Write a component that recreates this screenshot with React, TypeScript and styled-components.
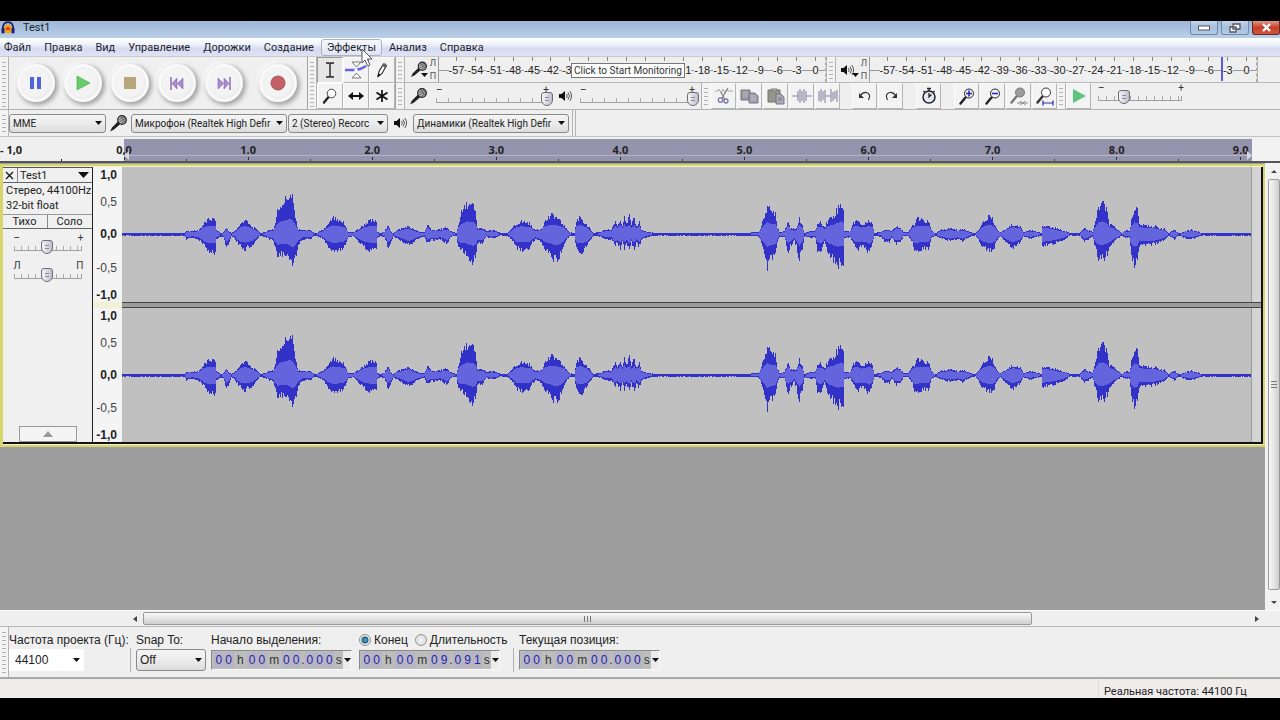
import React from "react";
import styled, { createGlobalStyle, css } from "styled-components";

const uiFont = `Roboto, "Noto Sans", sans-serif`;
const plainFont = `"Liberation Sans", Arial, sans-serif`;

const GlobalStyle = createGlobalStyle`
  *, *::before, *::after { box-sizing: border-box; }
  html, body { margin: 0; padding: 0; background: #000; }
  body { font-family: ${uiFont}; font-size: 12px; color: #222; }
  button, select, input { font: inherit; color: inherit; margin: 0; }
`;

/* ---------- window frame ---------- */

const Screen = styled.div`
  min-height: 100vh;
  padding: 21px 0 22px;
  background: #000;
  display: flex;
  flex-direction: column;
`;

const Window = styled.div`
  flex: 1;
  display: flex;
  flex-direction: column;
  background: #efefef;
  overflow: hidden;
`;

const TitleBar = styled.header`
  height: 17px;
  display: flex;
  align-items: flex-start;
  gap: 8px;
  padding-left: 1px;
  background: linear-gradient(#9db7d6, #b9cfe9);
`;

const Title = styled.h1`
  margin: 0;
  flex: 1;
  font: 400 11px/14px ${uiFont};
  color: #1c2430;
`;

const WindowButtons = styled.div`
  display: flex;
  gap: 3px;
`;

const WindowButton = styled.button<{ $close?: boolean }>`
  width: 28px;
  height: 14px;
  padding: 0;
  display: flex;
  align-items: center;
  justify-content: center;
  border: 1px solid ${(p) => (p.$close ? "#6a2a22" : "#6f88a8")};
  border-top: 0;
  border-radius: 0 0 3px 3px;
  background: ${(p) =>
    p.$close ? "linear-gradient(#e09a88, #c4402a 50%, #d0553a)" : "linear-gradient(#c4d5ea, #a5bfdd 50%, #b4cbe6)"};
`;

const MenuBar = styled.nav`
  height: 19px;
  display: flex;
  padding: 1px 0 0;
  background: linear-gradient(#ffffff, #f1f4fb 30%, #d6dcf0 60%, #dde3f3);
  border-bottom: 1px solid #c9c9cf;
`;

const MenuItem = styled.button<{ $hot?: boolean }>`
  height: 17px;
  padding: 0 5px;
  margin-right: 1px;
  border: 1px solid ${(p) => (p.$hot ? "#a9b0c2" : "transparent")};
  border-radius: 3px;
  background: ${(p) => (p.$hot ? "linear-gradient(#f6f8fd, #dfe4f2)" : "transparent")};
  font: 400 11px/14px ${uiFont};
  color: #1e1e30;
  position: relative;
  white-space: nowrap;
  &:first-child { padding-left: 3px; }
`;

const Pointer = styled.svg`
  position: absolute;
  left: 39px;
  top: 8px;
  z-index: 5;
`;

/* ---------- toolbars ---------- */

const Grip = styled.div<{ $bare?: boolean }>`
  width: 9px;
  flex: none;
  align-self: stretch;
  border-right: ${(p) => (p.$bare ? "0" : "1px solid #b4b4b4")};
  background:
    repeating-linear-gradient(transparent 0 3px, #b0b0b0 3px 4px) 2px 2px / 4px calc(100% - 4px) no-repeat,
    #f3f3f3;
`;

const ToolDock = styled.section`
  display: flex;
  height: 53px;
  border-bottom: 1px solid #b2b2b2;
`;

const Transport = styled.div`
  display: flex;
  align-items: center;
  gap: 9px;
  width: 299px;
  padding-left: 8px;
  border-right: 1px solid #a4a4a4;
`;

const RoundButton = styled.button<{ $apart?: boolean }>`
  width: 38px;
  height: 38px;
  margin-left: ${(p) => (p.$apart ? "7px" : "0")};
  padding: 0;
  display: flex;
  align-items: center;
  justify-content: center;
  border: 3px solid #f8f8f8;
  border-radius: 50%;
  background: #f3f3f3;
  box-shadow: 2px 2px 4px 1px #a6a6a6, -2px -2px 3px #fcfcfc, inset -1px -1px 3px #e8e8e8;
`;

const ToolGrid = styled.div`
  display: grid;
  grid-template-columns: repeat(3, 26px);
  grid-template-rows: 26px 26px;
  border-right: 1px solid #a4a4a4;
`;

const ToolButton = styled.button<{ $pressed?: boolean; $wide?: boolean }>`
  width: ${(p) => (p.$wide ? "26px" : "25px")};
  height: 100%;
  padding: 0;
  display: flex;
  align-items: center;
  justify-content: center;
  background: ${(p) => (p.$pressed ? "#e6e6e6" : "#f3f3f3")};
  border: 1px solid;
  border-color: ${(p) => (p.$pressed ? "#9a9a9a #fff #fff #9a9a9a" : "#fbfbfb #b4b4b4 #b4b4b4 #fbfbfb")};
`;

const Stack = styled.div`
  flex: 1;
  min-width: 0;
`;

const StackRow = styled.div`
  display: flex;
  height: 26px;
  &:first-child { border-bottom: 1px solid #b8b8b8; }
`;

const Meter = styled.button`
  display: flex;
  align-items: stretch;
  padding: 0 0 0 5px;
  border: 0;
  border-right: 1px solid #b0b0b0;
  background: transparent;
  position: relative;
`;

const MeterSource = styled.span`
  width: 18px;
  display: flex;
  align-items: center;
`;

const ChannelNames = styled.span`
  width: 10px;
  display: flex;
  flex-direction: column;
  justify-content: space-around;
  font-size: 9px;
  line-height: 12px;
  color: #555;
`;

const MeterScale = styled.span`
  width: 388px;
  display: flex;
  padding-left: 8px;
  border-left: 1px solid #999;
  border-right: 1px dashed #aaa;
  background: linear-gradient(#999, #999) 0 13px / 100% 1px no-repeat;
  position: relative;
`;

const MeterTick = styled.span`
  flex: 1;
  display: flex;
  flex-direction: column;
  align-items: center;
  font-family: ${plainFont};
  font-size: 11px;
  line-height: 14px;
  color: #222;
  &::before {
    content: "";
    width: 1px;
    height: 4px;
    margin-bottom: 2px;
    background: #888;
  }
`;

const MeterNumber = styled.span<{ $covered?: boolean }>`
  background: #efefef;
  visibility: ${(p) => (p.$covered ? "hidden" : "visible")};
`;

const PeakLine = styled.span`
  position: absolute;
  right: 33px;
  top: 0;
  bottom: 1px;
  width: 2px;
  background: #5a5ae6;
`;

const Tooltip = styled.span`
  position: absolute;
  left: 166px;
  top: 6px;
  padding: 0 2px;
  border: 1px solid #777;
  background: #fff;
  font-family: ${uiFont};
  font-size: 10px;
  line-height: 13px;
  color: #333;
  white-space: nowrap;
`;

const Mixer = styled.div`
  display: flex;
  align-items: center;
  gap: 6px;
  width: 297px;
  padding-left: 4px;
  border-right: 1px solid #b0b0b0;
`;

const ButtonRun = styled.div<{ $before?: number }>`
  display: flex;
  gap: 1px;
  margin-left: ${(p) => p.$before ?? 0}px;
`;

/* ---------- slider ---------- */

const SliderBox = styled.label<{ $w: number }>`
  width: ${(p) => p.$w}px;
  height: 22px;
  flex: none;
  display: grid;
  & > * { grid-area: 1 / 1; }
`;

const SliderEnds = styled.span`
  align-self: start;
  display: flex;
  justify-content: space-between;
  padding: 0 4px 0 2px;
  font-size: 10px;
  line-height: 9px;
  color: #333;
`;

const SliderTicks = styled.span<{ $step: number }>`
  align-self: end;
  height: 5px;
  margin: 0 6px 4px 2px;
  border-bottom: 1px solid #a0a0a0;
  border-right: 1px solid #a0a0a0;
  background: repeating-linear-gradient(90deg, #aaa 0 1px, transparent 1px ${(p) => p.$step}px);
`;

const Range = styled.input`
  appearance: none;
  align-self: end;
  width: 100%;
  height: 15px;
  background: transparent;
  &::-webkit-slider-runnable-track { height: 15px; background: transparent; }
  &::-webkit-slider-thumb {
    appearance: none;
    width: 12px;
    height: 14px;
    border: 1px solid #6c6c78;
    border-radius: 3px 3px 6px 6px;
    background:
      linear-gradient(#8c8c98, #8c8c98) 3px 4px / 4px 1px no-repeat,
      linear-gradient(#8c8c98, #8c8c98) 3px 7px / 4px 1px no-repeat,
      linear-gradient(90deg, #f4f4f8, #c0c0cc);
  }
`;

type SliderProps = { name: string; value: number; width: number; step?: number; low?: string; high?: string };

const Slider = ({ name, value, width, step = 12, low = "–", high = "+" }: SliderProps) => (
  <SliderBox $w={width}>
    <SliderEnds>
      <span>{low}</span>
      <span>{high}</span>
    </SliderEnds>
    <SliderTicks $step={step} />
    <Range type="range" aria-label={name} min={0} max={100} defaultValue={value} />
  </SliderBox>
);

/* ---------- drop-downs ---------- */

const DeviceBar = styled.section`
  display: flex;
  align-items: center;
  height: 27px;
  border-bottom: 1px solid #c4c4c4;
`;

const SelectBox = styled.span<{ $w: number }>`
  width: ${(p) => p.$w}px;
  display: grid;
  align-items: center;
  & > * { grid-area: 1 / 1; }
  & > svg { justify-self: end; margin-right: 4px; pointer-events: none; }
`;

const selectBase = css`
  appearance: none;
  width: 100%;
  padding: 0 12px 0 3px;
  outline: 0;
  overflow: hidden;
`;

const DeviceSelect = styled.select`
  ${selectBase}
  height: 19px;
  border: 1px solid #8a8a8a;
  border-radius: 3px;
  background: linear-gradient(#f5f5f5, #ebebeb 50%, #dcdcdc);
  font-size: 10px;
`;

const SnapSelect = styled(DeviceSelect)`
  height: 22px;
  font-size: 12px;
`;

const RateSelect = styled.select`
  ${selectBase}
  height: 22px;
  padding-left: 5px;
  border: 1px solid #fff;
  background: #fff;
`;

const Arrow = () => (
  <svg width="7" height="4" viewBox="0 0 7 4" aria-hidden="true">
    <path d="M0 0h7L3.500 4z" fill="#111" />
  </svg>
);

const DeviceIcon = styled.span<{ $w: number }>`
  width: ${(p) => p.$w}px;
  display: flex;
  justify-content: center;
`;

const DeviceEnd = styled.div`
  width: 4px;
  align-self: stretch;
  margin-left: 3px;
  border: 1px solid #b4b4b4;
  border-width: 0 1px;
`;

const devices = {
  host: "MME",
  input: "Микрофон (Realtek High Defir",
  channels: "2 (Stereo) Recorc",
  output: "Динамики (Realtek High Defir",
};

const Device = ({ name, width, value }: { name: string; width: number; value: string }) => (
  <SelectBox $w={width}>
    <DeviceSelect aria-label={name} defaultValue={value}>
      <option>{value}</option>
    </DeviceSelect>
    <Arrow />
  </SelectBox>
);

/* ---------- time ruler ---------- */

const Ruler = styled.section`
  display: flex;
  height: 26px;
  padding-top: 2px;
  border-bottom: 2px solid #55565a;
  font: 700 11px/14px "Open Sans", sans-serif;
  color: #222;
`;

const RulerLead = styled.div`
  width: 124px;
  flex: none;
  padding: 4px 0 0;
  background: linear-gradient(#222, #222) 61px 20px / 1px 2px no-repeat;
`;

const RulerBand = styled.div`
  flex: 1;
  display: grid;
  grid-template-columns: repeat(9, 11%) 1fr;
  background: linear-gradient(#b4b4c0, #b4b4c0) 0 16px / 100% 1px no-repeat, #9494ae;
  position: relative;
`;

const RulerMark = styled.div`
  margin-left: -20px;
  width: 40px;
  padding-top: 4px;
  display: flex;
  flex-direction: column;
  align-items: center;
  &::after {
    content: "";
    width: 1px;
    height: 3px;
    background: #333;
  }
`;

const RulerCell = styled.div`
  background: linear-gradient(#444, #444) 50% 20px / 1px 2px no-repeat;
  min-width: 0;
  &:last-of-type { background: none; }
`;

const RulerTail = styled.div`
  width: 28px;
  flex: none;
  background: #f2f2f2;
`;

const EdgeArrow = styled.svg<{ $end?: boolean }>`
  position: absolute;
  bottom: 1px;
  ${(p) => (p.$end ? "right: 0;" : "left: 0;")}
`;

/* ---------- tracks ---------- */

const Workspace = styled.main`
  flex: 1;
  display: flex;
  min-height: 0;
  background: #9e9e9e;
`;

const TrackList = styled.div`
  flex: 1;
  min-width: 0;
  padding-top: 1px;
`;

const Track = styled.article`
  display: flex;
  height: 283px;
  padding: 1px 0 1px 0;
  border: 2px solid #d6d66a;
  border-left-width: 3px;
  background: #f1f1d8;
  & > * { border-bottom: 2px solid #111; }
`;

const TrackPanel = styled.div`
  width: 90px;
  flex: none;
  display: flex;
  flex-direction: column;
  border-right: 1px solid #222;
  border-top: 1px solid #555;
  background: #f0f0f0;
  font-size: 11px;
`;

const PanelRow = styled.div`
  display: flex;
  height: 15px;
  border-bottom: 1px solid #666;
`;

const PanelButton = styled.button<{ $grow?: boolean }>`
  ${(p) => (p.$grow ? "flex: 1;" : "width: 15px;")}
  padding: 0 3px 0 2px;
  display: flex;
  align-items: center;
  justify-content: ${(p) => (p.$grow ? "space-between" : "center")};
  border: 0;
  border-right: 1px solid #888;
  background: transparent;
  line-height: 13px;
  &:last-child { border-right: 0; }
`;

const ToggleButton = styled(PanelButton)`
  flex: 1;
  justify-content: center;
`;

const TrackInfo = styled.p`
  margin: 0;
  padding: 0 3px;
  height: 31px;
  line-height: 15px;
  font-size: 11px;
  white-space: nowrap;
`;

const ToggleRow = styled(PanelRow)`
  border-top: 1px solid #999;
`;

const PanelSliders = styled.div`
  flex: 1;
  display: flex;
  flex-direction: column;
  align-items: center;
  gap: 6px;
  padding: 4px 0 0 4px;
`;

const CollapseButton = styled.button`
  align-self: center;
  width: 58px;
  height: 16px;
  padding: 0;
  display: flex;
  align-items: center;
  justify-content: center;
  border: 1px solid #999;
  background: #f4f4f4;
`;

const Channels = styled.div`
  flex: 1;
  min-width: 0;
  display: flex;
  flex-direction: column;
  border-right: 2px solid #111;
`;

const Channel = styled.div`
  flex: 1;
  display: flex;
  min-height: 0;
`;

const ChannelGap = styled.div`
  height: 6px;
  margin-left: 29px;
  border: 1px solid #444;
  border-width: 1px 0;
  background: #9c9c9c;
`;

const LevelScale = styled.div`
  width: 29px;
  flex: none;
  display: grid;
  grid-template-rows: 16px 38px 26px 41px 1fr;
  align-items: center;
  background: #f4f4f4;
  font-family: ${plainFont};
  font-size: 12px;
  line-height: 12px;
  text-align: right;
  padding-right: 5px;
`;

const Level = styled.span<{ $major?: boolean }>`
  font-weight: ${(p) => (p.$major ? 700 : 400)};
  color: ${(p) => (p.$major ? "#222" : "#444")};
`;

const Wave = styled.div`
  flex: 1;
  min-width: 0;
  background: #c0c0c0;
  border-right: 1px solid #999;
  & > svg { display: block; width: 100%; height: 100%; }
`;

const AfterClip = styled.div`
  width: 9px;
  flex: none;
  background: #d4d4d4;
`;

/* Envelope of the clip: x, peak above the axis, peak below it. */
const envelope: number[][] = [
  [122, 1, 1], [184, 1, 1], [186, 3, 5], [192, 3, 3], [198, 4, 5], [202, 9, 9], [206, 13, 16], [210, 16, 20],
  [215, 15, 20], [216, 4, 5], [220, 1, 2], [223, 2, 3], [225, 5, 10], [226, 8, 14], [228, 3, 10], [231, 1, 2],
  [234, 3, 3], [236, 5, 7], [240, 10, 13], [245, 16, 17], [247, 12, 13], [251, 8, 12], [256, 5, 6], [260, 1, 1],
  [264, 2, 2], [269, 4, 5], [273, 5, 7], [275, 12, 14], [277, 24, 26], [281, 32, 22], [285, 36, 21], [289, 41, 26],
  [291, 38, 34], [292, 37, 35], [294, 25, 29], [296, 12, 20], [298, 5, 10], [302, 4, 5], [310, 4, 5], [314, 1, 1],
  [318, 2, 2], [322, 4, 4], [327, 9, 11], [333, 17, 19], [338, 13, 16], [343, 12, 14], [346, 6, 8], [348, 2, 3],
  [353, 2, 2], [358, 5, 7], [364, 10, 13], [370, 14, 18], [376, 13, 17], [377, 2, 4], [380, 1, 1], [384, 3, 3],
  [387, 7, 11], [388, 8, 14], [390, 3, 10], [393, 1, 2], [397, 4, 4], [402, 6, 7], [408, 8, 11], [413, 5, 8],
  [420, 2, 3], [424, 2, 2], [427, 9, 9], [430, 6, 6], [434, 4, 6], [440, 5, 5], [445, 6, 8], [447, 6, 9],
  [450, 3, 3], [456, 1, 1], [458, 10, 14], [460, 20, 18], [463, 25, 18], [467, 32, 21], [470, 29, 26],
  [473, 29, 29], [475, 22, 26], [477, 6, 10], [482, 6, 9], [486, 3, 2], [492, 4, 4], [500, 1, 1], [507, 1, 1],
  [512, 6, 6], [516, 10, 13], [520, 13, 16], [528, 12, 15], [532, 7, 8], [535, 4, 5], [541, 6, 8], [545, 14, 15],
  [549, 18, 18], [553, 20, 25], [557, 16, 27], [561, 12, 18], [565, 7, 7], [569, 2, 2], [574, 1, 1], [576, 13, 16],
  [580, 19, 19], [584, 12, 16], [589, 6, 8], [593, 1, 1], [600, 2, 2], [606, 5, 5], [611, 4, 5], [615, 14, 12],
  [617, 8, 9], [620, 17, 15], [622, 9, 9], [624, 21, 15], [626, 10, 9], [629, 19, 17], [631, 9, 8], [634, 17, 15],
  [636, 8, 8], [639, 13, 13], [641, 5, 6], [644, 3, 4], [648, 2, 2], [656, 1, 1],
  [740, 1, 1], [758, 2, 2], [761, 8, 8], [764, 20, 20], [767, 30, 34], [770, 23, 26], [775, 23, 23], [777, 8, 8],
  [779, 2, 2], [784, 3, 3], [788, 15, 19], [790, 6, 12], [794, 5, 6], [796, 6, 12], [799, 18, 28], [802, 8, 14],
  [804, 1, 2], [810, 3, 3], [815, 4, 3], [817, 10, 16], [821, 12, 17], [824, 7, 7], [828, 15, 19], [833, 19, 27],
  [837, 26, 32], [841, 32, 31], [843, 27, 30], [844, 3, 4], [850, 3, 3], [853, 12, 10], [857, 16, 16], [861, 9, 12],
  [865, 11, 14], [869, 16, 21], [872, 10, 10], [874, 1, 1], [880, 2, 2], [885, 5, 8], [889, 4, 8], [891, 3, 3],
  [896, 8, 10], [900, 7, 9], [903, 2, 2], [908, 2, 1], [912, 9, 9], [914, 10, 20], [917, 16, 17], [922, 14, 15],
  [928, 13, 15], [931, 4, 4], [935, 1, 1], [940, 4, 4], [950, 6, 7], [957, 4, 5], [962, 5, 7], [970, 2, 2],
  [975, 1, 1], [979, 6, 8], [984, 13, 14], [989, 20, 18], [993, 14, 16], [997, 4, 5], [1000, 2, 2], [1006, 6, 8],
  [1012, 10, 14], [1020, 8, 8], [1023, 2, 2], [1030, 4, 4], [1038, 2, 2], [1041, 1, 1], [1042, 8, 14],
  [1045, 9, 12], [1055, 6, 9], [1062, 4, 6], [1070, 1, 1], [1079, 1, 1], [1084, 6, 7], [1088, 4, 5], [1092, 2, 2],
  [1095, 12, 14], [1098, 28, 24], [1102, 32, 26], [1106, 26, 22], [1109, 10, 14], [1113, 8, 8], [1118, 4, 4],
  [1121, 1, 1], [1125, 4, 3], [1129, 3, 3], [1131, 15, 22], [1134, 28, 32], [1137, 26, 28], [1139, 10, 12],
  [1145, 9, 11], [1155, 8, 10], [1164, 5, 6], [1168, 1, 1], [1174, 4, 5], [1178, 1, 1], [1186, 3, 4], [1191, 5, 5],
  [1196, 3, 3], [1202, 1, 1], [1251, 1, 1],
];

const WAVE_START = 122;
const WAVE_WIDTH = 1129;
const WAVE_HEIGHT = 134;
const AXIS = 67;

const noise = (n: number) => {
  const s = Math.sin(n * 12.9898) * 43758.5453;
  return s - Math.floor(s);
};

function buildWave() {
  let peaks = "";
  let rms = "";
  let k = 0;
  for (let x = 0; x < WAVE_WIDTH; x++) {
    const at = x + WAVE_START;
    while (k < envelope.length - 2 && envelope[k + 1][0] <= at) k++;
    const [x0, u0, d0] = envelope[k];
    const [x1, u1, d1] = envelope[k + 1];
    const t = Math.min(1, (at - x0) / (x1 - x0));
    const up = u0 + (u1 - u0) * t;
    const down = d0 + (d1 - d0) * t;
    const peakUp = up * (0.76 + noise(at) * 0.34) + 0.3;
    const peakDown = down * (0.74 + noise(at + 4000) * 0.36) + 0.4;
    peaks += `M${x} ${(AXIS - peakUp).toFixed(1)}h1V${(AXIS + peakDown).toFixed(1)}h-1z`;
    if (up > 1.6) {
      const rmsUp = Math.min(up * 0.72, 4.5 + up * 0.26);
      const rmsDown = Math.min(down * 0.62, 4 + down * 0.26);
      rms += `M${x} ${(AXIS - rmsUp).toFixed(1)}h1V${(AXIS + rmsDown).toFixed(1)}h-1z`;
    }
  }
  return { peaks, rms };
}

const wave = buildWave();

const WaveChannel = ({ name }: { name: string }) => (
  <Channel aria-label={name}>
    <LevelScale>
      <Level $major>1,0</Level>
      <Level>0,5</Level>
      <Level $major>0,0</Level>
      <Level>-0,5</Level>
      <Level $major>-1,0</Level>
    </LevelScale>
    <Wave>
      <svg viewBox={`0 0 ${WAVE_WIDTH} ${WAVE_HEIGHT}`} preserveAspectRatio="none" shapeRendering="crispEdges">
        <path d={wave.peaks} fill="#3232c8" />
        <path d={wave.rms} fill="#6464dc" />
      </svg>
    </Wave>
    <AfterClip />
  </Channel>
);

/* ---------- scrollbars ---------- */

const VScroll = styled.div`
  width: 15px;
  flex: none;
  display: flex;
  flex-direction: column;
  padding-left: 3px;
  background: #f2f2f2;
`;

const HScroll = styled.div`
  display: flex;
  height: 17px;
  padding: 1px 15px 1px 126px;
  border-top: 1px solid #f8f8f8;
  border-bottom: 1px solid #b8b8b8;
  background: #efefef;
`;

const ScrollArrow = styled.button`
  flex: none;
  width: 17px;
  min-height: 14px;
  padding: 0;
  border: 0;
  background: transparent;
  display: flex;
  align-items: center;
  justify-content: center;
`;

const VArrow = styled(ScrollArrow)`
  width: 12px;
  height: 16px;
`;

const ScrollLane = styled.div<{ $down?: boolean }>`
  flex: 1;
  min-width: 0;
  display: flex;
  flex-direction: ${(p) => (p.$down ? "column" : "row")};
`;

const ScrollThumb = styled.div<{ $down?: boolean }>`
  flex: none;
  ${(p) => (p.$down ? "height: 99%;" : "width: calc(80% + 5px);")}
  display: flex;
  align-items: center;
  justify-content: center;
  border: 1px solid #999;
  border-radius: 2px;
  background: linear-gradient(${(p) => (p.$down ? "90deg" : "180deg")}, #f8f8f8, #e4e4e4 50%, #cecece);
`;

/* ---------- selection bar ---------- */

const SelectionBar = styled.section`
  display: flex;
  height: 52px;
  border-bottom: 2px solid #a8a8a8;
  font-family: ${plainFont};
  white-space: nowrap;
`;

const Field = styled.div<{ $w: number }>`
  width: ${(p) => p.$w}px;
  padding-top: 5px;
  display: flex;
  flex-direction: column;
  gap: 1px;
`;

const FieldLabel = styled.label`
  height: 16px;
  display: flex;
  align-items: center;
  font-size: 12px;
  line-height: 16px;
  color: #222;
`;

const Divider = styled.div`
  width: 1px;
  height: 24px;
  margin: 21px 5px 0 6px;
  background: #b0b0b0;
`;

const RadioRow = styled.div`
  display: flex;
  gap: 7px;
`;

const RadioLabel = styled(FieldLabel)`
  gap: 3px;
`;

const Radio = styled.input`
  appearance: none;
  width: 12px;
  height: 12px;
  border: 1px solid #8e8f8f;
  border-radius: 50%;
  background: radial-gradient(#f4f4f4, #d8d8d8);
  &:checked { background: radial-gradient(#3a90b8 0 2px, #1c4a66 3px, #e8eef2 4px); }
`;

const TimeBox = styled.div`
  width: 141px;
  height: 20px;
  margin-top: 1px;
  display: flex;
  align-items: center;
  padding-left: 2px;
  border: 1px solid;
  border-color: #888 #f8f8f8 #f8f8f8 #888;
  background: #bdbdbd;
  font-size: 12px;
`;

const TimeDigit = styled.span`
  width: 10px;
  height: 16px;
  line-height: 16px;
  text-align: center;
  background: #b6b6c2;
  color: #2a22b0;
`;

const TimeUnit = styled.span<{ $w: number }>`
  width: ${(p) => p.$w}px;
  text-align: center;
  line-height: 18px;
  color: #333;
`;

const TimeMenu = styled.button`
  width: 8px;
  height: 18px;
  margin-left: auto;
  padding: 0;
  border: 0;
  background: #ececec;
  display: flex;
  align-items: center;
  justify-content: center;
`;

const unitWidth: Record<string, number> = { h: 14, m: 15, ".": 4, s: 9 };

const TimeField = ({ name, value }: { name: string; value: string }) => (
  <TimeBox role="group" aria-label={name}>
    {value.split("").map((ch, i) =>
      /\d/.test(ch) ? <TimeDigit key={i}>{ch}</TimeDigit> : <TimeUnit key={i} $w={unitWidth[ch]}>{ch}</TimeUnit>
    )}
    <TimeMenu aria-label="Формат">
      <Arrow />
    </TimeMenu>
  </TimeBox>
);

const StatusBar = styled.footer`
  height: 19px;
  display: flex;
  justify-content: flex-end;
  padding-right: 16px;
  background: #f0ecec;
  font: 400 11px/26px ${uiFont};
  color: #222;
`;

const StatusCell = styled.span`
  width: 166px;
  padding-left: 5px;
  border-left: 1px solid #dcdcdc;
  white-space: nowrap;
`;

/* ---------- icons ---------- */

const Logo = () => (
  <svg width="14" height="14" viewBox="0 0 14 14" aria-hidden="true">
    <ellipse cx="7" cy="8" rx="4" ry="4.500" fill="#f2a01c" />
    <path d="M5 7l1 2 1-3 1 3 1-2" stroke="#c84010" strokeWidth="1" fill="none" />
    <path d="M1.800 9C1 3.500 4 1.200 7 1.200S13 3.500 12.200 9" fill="none" stroke="#20206a" strokeWidth="1.800" />
    <rect x="0.500" y="6.500" width="3" height="6" rx="1.300" fill="#20207a" />
    <rect x="10.500" y="6.500" width="3" height="6" rx="1.300" fill="#20207a" />
  </svg>
);

const Mic = () => (
  <svg width="19" height="19" viewBox="0 0 19 19" aria-hidden="true">
    <path d="M1 17.500L3 13.500 9.500 7l2.500 2.500L5 15.500z" fill="#222" />
    <circle cx="13" cy="6" r="4.300" fill="#b8b8b8" stroke="#222" strokeWidth="1.200" />
    <path d="M10 5.500l5-2.500M10 8l6.500-3.500M12 9.500l5-3M11.500 2.500l4.500 6M14 2l3 4" stroke="#444" strokeWidth=".7" />
  </svg>
);

const Speaker = () => (
  <svg width="13" height="12" viewBox="0 0 13 12" aria-hidden="true">
    <path d="M0 4h2.500L6 1v10L2.500 8H0z" fill="#111" />
    <path d="M7.500 4q1.500 2 0 4M9 2.500q3 3.500 0 7M10.800 1q3.500 5 0 10" fill="none" stroke="#444" strokeWidth=".9" />
  </svg>
);

const MenuMark = styled.svg`
  align-self: flex-end;
  margin: 0 0 5px -7px;
`;

const icon = (w: number, h: number, body: React.ReactNode) => (
  <svg width={w} height={h} viewBox={`0 0 ${w} ${h}`} fill="none" aria-hidden="true">
    {body}
  </svg>
);

const lens = (fill: string, edge: string) => (
  <>
    <path d="M1.500 16.500L6.500 10.500" stroke={edge} strokeWidth="2.400" strokeLinecap="round" />
    <circle cx="10" cy="6.500" r="4.500" fill={fill} stroke={edge} strokeWidth="1" />
  </>
);

const transport = [
  { name: "Пауза", art: icon(14, 14, <path d="M1 1h4v12H1zM8 1h4v12H8z" fill="#5064dc" />) },
  { name: "Воспроизвести", art: icon(16, 16, <path d="M2 1l13 7-13 7z" fill="#68cc68" stroke="#48a848" strokeWidth=".6" />) },
  { name: "Стоп", art: icon(12, 12, <path d="M0 0h12v12H0z" fill="#b8a67c" />) },
  { name: "В начало", art: icon(14, 13, <><path d="M1 0v13" stroke="#8464b4" strokeWidth="1.400" /><path d="M7 1v11L2 6.500zM13 1v11L7.500 6.500z" fill="#a88ccc" stroke="#8464b4" strokeWidth=".6" /></>) },
  { name: "В конец", art: icon(14, 13, <><path d="M13 0v13" stroke="#8464b4" strokeWidth="1.400" /><path d="M1 1v11l5.500-5.500zM7 1v11l5-5.500z" fill="#a88ccc" stroke="#8464b4" strokeWidth=".6" /></>) },
  { name: "Запись", art: icon(16, 16, <circle cx="8" cy="8" r="7" fill="#c46068" stroke="#ac5058" />) },
];

const tools = [
  { name: "Выделение", art: icon(12, 18, <path d="M2 2h3l1 1 1-1h3M2 16h3l1-1 1 1h3M6 3v12" stroke="#222" strokeWidth="1.400" />) },
  { name: "Изменение огибающей", art: icon(24, 22, <><path d="M8 3h9l-4.500 5zM8 19h9l-4.500-5z" fill="#fff" stroke="#777" /><path d="M1 11h9q6 0 12-4" stroke="#6464e0" strokeWidth="2.600" /><path d="M10 11l2-2 2 2-2 2z" fill="#fff" /></>) },
  { name: "Карандаш", art: icon(12, 18, <><path d="M2 15.500l1-5L7.500 3l3 1.500-4.500 8z" fill="#fff" stroke="#222" strokeWidth="1.100" /><path d="M7.500 3q2-2 3 1.500L9 7 6.500 5z" fill="#666" /><path d="M2 15.500l.5-2.500 1.500 1z" fill="#111" stroke="#111" /></>) },
  { name: "Масштаб", art: icon(18, 18, <><path d="M3 15.500L7.500 10" stroke="#222" strokeWidth="2.400" strokeLinecap="round" /><circle cx="10.500" cy="6.500" r="4.300" fill="#fdfdfd" stroke="#444" /></>) },
  { name: "Перемещение", art: icon(16, 10, <path d="M0 5l5-4v3h6V1l5 4-5 4V6H5v3z" fill="#111" />) },
  { name: "Мультиинструмент", art: icon(14, 14, <path d="M7 1v12M1.500 3.500l11 7M12.500 3.500l-11 7" stroke="#111" strokeWidth="1.700" />) },
];

const edit = [
  { name: "Вырезать", art: icon(18, 18, <><path d="M0 4h3l1-2 2 4 2-4 2 4 2-4 1 2h5" stroke="#aaa" /><path d="M13 1L7 11M6 5l4 8" stroke="#888" strokeWidth="1.300" /><circle cx="5.500" cy="13" r="2.200" stroke="#7474a8" strokeWidth="1.300" /><circle cx="11" cy="14" r="2" stroke="#7474a8" strokeWidth="1.300" /></>) },
  { name: "Копировать", art: icon(19, 17, <><path d="M1 2h9v10H1z" fill="#98989e" stroke="#74747c" /><path d="M9 5h6l3 3v7H9z" fill="#a0a0aa" stroke="#74748c" /><path d="M3 4h5M3 6h5M3 8h5M11 8h4M11 10h5M11 12h5" stroke="#b8b8be" /></>) },
  { name: "Вставить", art: icon(18, 17, <><path d="M1 2h12v12H1z" fill="#94948a" stroke="#747468" /><path d="M4 1h6v2H4z" fill="#c0c0b8" stroke="#777" /><path d="M9 6h5l3 3v7H9z" fill="#acacb6" stroke="#74748c" /><path d="M11 10h4M11 12h4" stroke="#74748c" /></>) },
  { name: "Обрезать", art: icon(20, 16, <path d="M0 8h6M14 8h6M6 3v10M8 1v14M10 3v10M12 1v14M14 3v10" stroke="#8484a4" strokeWidth="1.100" />) },
  { name: "Тишина", art: icon(20, 16, <path d="M7 8h6M1 3v10M3 1v13M5 3v9M7 2v13M13 1v13M15 4v9M17 3v8M19 2v12" stroke="#8484a4" strokeWidth="1.100" />) },
];

const history = [
  { name: "Отменить", art: icon(14, 12, <><path d="M2.500 5.500Q5 2 8.500 2.500 13.500 4 10.500 10" stroke="#333" strokeWidth="1.200" /><path d="M1 3v5h5z" fill="#333" /></>) },
  { name: "Повторить", art: icon(14, 12, <><path d="M11.500 5.500Q9 2 5.500 2.500 .5 4 3.500 10" stroke="#333" strokeWidth="1.200" /><path d="M13 3v5H8z" fill="#333" /></>) },
];

const timer = icon(16, 18, <><circle cx="8" cy="10" r="6" fill="#e4e8f4" stroke="#222" strokeWidth="1.500" /><path d="M6 1.500h4M8 1.500V4M2.500 4l1.500 1.500M13.500 4L12 5.500M8 6v4l2.500-2.500" stroke="#222" strokeWidth="1.300" /></>);

const zooms = [
  { name: "Приблизить", art: icon(16, 18, <>{lens("#f4f4ff", "#222")}<path d="M7 6.500h6M10 3.500v6" stroke="#2828b4" strokeWidth="1.600" /></>) },
  { name: "Отдалить", art: icon(16, 18, <>{lens("#f4f4ff", "#222")}<path d="M7 6.500h6" stroke="#2828b4" strokeWidth="1.600" /></>) },
  { name: "Уместить выделенное", art: icon(18, 20, <>{lens("#9c9c9c", "#777")}<path d="M7 17h11M10 15l2.500 2-2.500 2M15.500 15L13 17l2.500 2" stroke="#888" /></>) },
  { name: "Уместить проект", art: icon(18, 20, <>{lens("#ffffff", "#333")}<path d="M7 17h10M7 14.500v5M17 14.500v5" stroke="#2c2c9c" strokeWidth="1.200" /></>) },
];

const decibels = Array.from({ length: 20 }, (_, i) => -57 + i * 3);

const menus = ["Файл", "Правка", "Вид", "Управление", "Дорожки", "Создание", "Эффекты", "Анализ", "Справка"];

const seconds = ["0,0", "1.0", "2.0", "3.0", "4.0", "5.0", "6.0", "7.0", "8.0", "9.0"];

const LevelMeter = ({ name, source, peak, hint }: { name: string; source: React.ReactNode; peak?: boolean; hint?: string }) => (
  <Meter aria-label={name}>
    <MeterSource>{source}</MeterSource>
    <MenuMark width="7" height="4" viewBox="0 0 7 4" aria-hidden="true">
      <path d="M0 0h7L3.500 4z" fill="#111" />
    </MenuMark>
    <ChannelNames>
      <span>Л</span>
      <span>П</span>
    </ChannelNames>
    <MeterScale>
      {decibels.map((d) => (
        <MeterTick key={d}>
          <MeterNumber $covered={!!hint && d > -39 && d < -21}>{d}</MeterNumber>
        </MeterTick>
      ))}
      {peak && <PeakLine />}
    </MeterScale>
    {hint && <Tooltip role="tooltip">{hint}</Tooltip>}
  </Meter>
);

type Action = { name: string; art: React.ReactNode };

const Actions = ({ items, before }: { items: Action[]; before?: number }) => (
  <ButtonRun $before={before}>
    {items.map((a) => (
      <ToolButton key={a.name} aria-label={a.name}>
        {a.art}
      </ToolButton>
    ))}
  </ButtonRun>
);

export default function App() {
  return (
    <Screen>
      <GlobalStyle />
      <Window>
        <TitleBar>
          <Logo />
          <Title>Test1</Title>
          <WindowButtons>
            <WindowButton aria-label="Свернуть">
              {icon(12, 6, <rect x=".5" y="1" width="11" height="4" fill="#fff" stroke="#556" />)}
            </WindowButton>
            <WindowButton aria-label="Восстановить">
              {icon(12, 10, <path d="M4 1h7v5H4zM1 4h6v5H1z" fill="#fff" stroke="#556" strokeWidth="1.300" />)}
            </WindowButton>
            <WindowButton $close aria-label="Закрыть">
              {icon(11, 9, <path d="M2 1l7 7M9 1L2 8" stroke="#fff" strokeWidth="2.400" />)}
            </WindowButton>
          </WindowButtons>
        </TitleBar>

        <MenuBar>
          {menus.map((m) => (
            <MenuItem key={m} $hot={m === "Эффекты"}>
              {m}
              {m === "Эффекты" && (
                <Pointer width="12" height="20" viewBox="0 0 12 20" aria-hidden="true">
                  <path d="M1 1v14l3-3 2.500 6 2.500-1-2.500-6H11z" fill="#fff" stroke="#444" strokeWidth=".9" />
                </Pointer>
              )}
            </MenuItem>
          ))}
        </MenuBar>

        <ToolDock>
          <Grip />
          <Transport>
            {transport.map((b, i) => (
              <RoundButton key={b.name} aria-label={b.name} $apart={i === 5}>
                {b.art}
              </RoundButton>
            ))}
          </Transport>
          <Grip />
          <ToolGrid>
            {tools.map((t, i) => (
              <ToolButton key={t.name} aria-label={t.name} $wide $pressed={i === 0}>
                {t.art}
              </ToolButton>
            ))}
          </ToolGrid>
          <Stack>
            <StackRow>
              <Grip />
              <LevelMeter name="Уровень записи" source={<Mic />} hint="Click to Start Monitoring" />
              <Grip />
              <LevelMeter name="Уровень воспроизведения" source={<Speaker />} peak />
            </StackRow>
            <StackRow>
              <Grip />
              <Mixer>
                <Mic />
                <Slider name="Громкость записи" value={100} width={119} />
                <Speaker />
                <Slider name="Громкость воспроизведения" value={100} width={121} />
              </Mixer>
              <Grip $bare />
              <Actions items={edit} />
              <Actions items={history} before={12} />
              <Actions items={[{ name: "Таймер", art: timer }]} before={13} />
              <Actions items={zooms} before={13} />
              <Grip />
              <Actions
                items={[
                  { name: "Воспроизвести на скорости", art: icon(14, 16, <path d="M1 1l13 7-13 7z" fill="#5cc47c" />) },
                ]}
              />
              <ButtonRun $before={5}>
                <Slider name="Скорость" value={28} width={92} step={8} />
              </ButtonRun>
            </StackRow>
          </Stack>
        </ToolDock>

        <DeviceBar>
          <Grip />
          <Device name="Звуковой узел" width={97} value={devices.host} />
          <DeviceIcon $w={25}>
            <Mic />
          </DeviceIcon>
          <Device name="Устройство записи" width={156} value={devices.input} />
          <DeviceIcon $w={1} />
          <Device name="Каналы записи" width={100} value={devices.channels} />
          <DeviceIcon $w={25}>
            <Speaker />
          </DeviceIcon>
          <Device name="Устройство воспроизведения" width={156} value={devices.output} />
          <DeviceEnd />
        </DeviceBar>

        <Ruler>
          <RulerLead>- 1,0</RulerLead>
          <RulerBand>
            {seconds.map((s) => (
              <RulerCell key={s}>
                <RulerMark>{s}</RulerMark>
              </RulerCell>
            ))}
            <EdgeArrow width="6" height="9" viewBox="0 0 6 9" aria-hidden="true">
              <path d="M5 0v9L0 4.500z" fill="#d8d8e0" />
            </EdgeArrow>
            <EdgeArrow $end width="6" height="9" viewBox="0 0 6 9" aria-hidden="true">
              <path d="M1 0v9l5-4.500z" fill="#d8d8e0" />
            </EdgeArrow>
          </RulerBand>
          <RulerTail />
        </Ruler>

        <Workspace>
          <TrackList>
            <Track>
              <TrackPanel>
                <PanelRow>
                  <PanelButton aria-label="Закрыть дорожку">
                    {icon(9, 9, <path d="M1 1l7 7M8 1L1 8" stroke="#111" strokeWidth="1.200" />)}
                  </PanelButton>
                  <PanelButton $grow>
                    Test1
                    {icon(11, 6, <path d="M0 0h11L5.500 6z" fill="#111" />)}
                  </PanelButton>
                </PanelRow>
                <TrackInfo>
                  Стерео, 44100Hz
                  <br />
                  32-bit float
                </TrackInfo>
                <ToggleRow>
                  <ToggleButton>Тихо</ToggleButton>
                  <ToggleButton>Соло</ToggleButton>
                </ToggleRow>
                <PanelSliders>
                  <Slider name="Усиление" value={46} width={76} step={7} />
                  <Slider name="Панорама" value={46} width={76} step={7} low="Л" high="П" />
                </PanelSliders>
                <CollapseButton aria-label="Свернуть дорожку">
                  {icon(12, 6, <path d="M1 6h10L6 0z" fill="#999" />)}
                </CollapseButton>
              </TrackPanel>
              <Channels>
                <WaveChannel name="Левый канал" />
                <ChannelGap />
                <WaveChannel name="Правый канал" />
              </Channels>
            </Track>
          </TrackList>
          <VScroll>
            <VArrow aria-label="Вверх">{icon(6, 3, <path d="M0 3h6L3 0z" fill="#444" />)}</VArrow>
            <ScrollLane $down>
              <ScrollThumb $down>{icon(6, 7, <path d="M0 .5h6M0 3.500h6M0 6.500h6" stroke="#777" />)}</ScrollThumb>
            </ScrollLane>
            <VArrow aria-label="Вниз">{icon(6, 3, <path d="M0 0h6L3 3z" fill="#444" />)}</VArrow>
          </VScroll>
        </Workspace>

        <HScroll>
          <ScrollArrow aria-label="Влево">{icon(4, 6, <path d="M4 0v6L0 3z" fill="#444" />)}</ScrollArrow>
          <ScrollLane>
            <ScrollThumb>{icon(8, 6, <path d="M.5 0v6M3.500 0v6M6.500 0v6" stroke="#777" />)}</ScrollThumb>
          </ScrollLane>
          <ScrollArrow aria-label="Вправо">{icon(4, 6, <path d="M0 0v6l4-3z" fill="#444" />)}</ScrollArrow>
        </HScroll>

        <SelectionBar>
          <Grip />
          <Field $w={115}>
            <FieldLabel htmlFor="rate">Частота проекта (Гц):</FieldLabel>
            <SelectBox $w={75}>
              <RateSelect id="rate" defaultValue="44100">
                <option>44100</option>
              </RateSelect>
              <Arrow />
            </SelectBox>
          </Field>
          <Divider />
          <Field $w={75}>
            <FieldLabel htmlFor="snap">Snap To:</FieldLabel>
            <SelectBox $w={70}>
              <SnapSelect id="snap" defaultValue="Off">
                <option>Off</option>
              </SnapSelect>
              <Arrow />
            </SelectBox>
          </Field>
          <Field $w={148}>
            <FieldLabel as="span">Начало выделения:</FieldLabel>
            <TimeField name="Начало выделения" value="00h00m00.000s" />
          </Field>
          <Field $w={148}>
            <RadioRow>
              <RadioLabel>
                <Radio type="radio" name="span" defaultChecked />
                Конец
              </RadioLabel>
              <RadioLabel>
                <Radio type="radio" name="span" />
                Длительность
              </RadioLabel>
            </RadioRow>
            <TimeField name="Конец" value="00h00m09.091s" />
          </Field>
          <Divider />
          <Field $w={148}>
            <FieldLabel as="span">Текущая позиция:</FieldLabel>
            <TimeField name="Текущая позиция" value="00h00m00.000s" />
          </Field>
        </SelectionBar>

        <StatusBar>
          <StatusCell>Реальная частота: 44100 Гц</StatusCell>
        </StatusBar>
      </Window>
    </Screen>
  );
}
